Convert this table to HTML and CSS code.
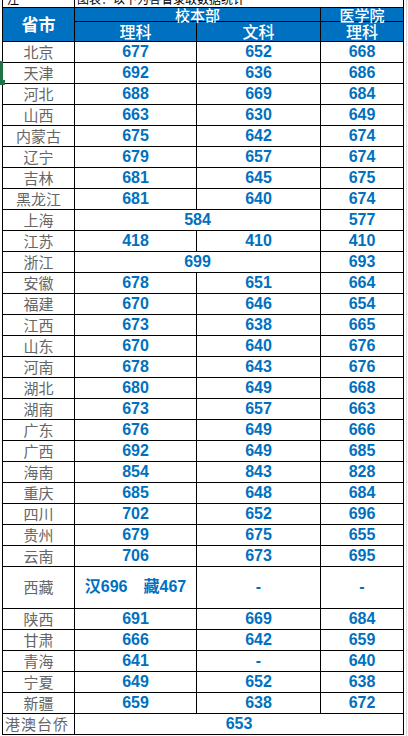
FILE: index.html
```html
<!DOCTYPE html>
<html lang="zh">
<head>
<meta charset="utf-8">
<title>分数线</title>
<link rel="stylesheet" href="styles.css">
</head>
<body>
<div class="sheet">
  <div class="marker"><span class="marker-dot"></span></div>
  <table class="scores">
    <colgroup>
      <col class="c1"><col class="c2"><col class="c3"><col class="c4">
    </colgroup>
    <tbody>
      <tr class="cut">
        <td><div class="clip clip-left">注</div></td>
        <td colspan="3"><div class="clip">图表：以下为各省录取数据统计</div></td>
      </tr>
      <tr class="h1">
        <th rowspan="2" class="prov-h">省市</th>
        <th colspan="2">校本部</th>
        <th>医学院</th>
      </tr>
      <tr class="h2">
        <th>理科</th>
        <th>文科</th>
        <th>理科</th>
      </tr>
      <tr><td class="p">北京</td><td>677</td><td>652</td><td>668</td></tr>
      <tr><td class="p">天津</td><td>692</td><td>636</td><td>686</td></tr>
      <tr><td class="p">河北</td><td>688</td><td>669</td><td>684</td></tr>
      <tr><td class="p">山西</td><td>663</td><td>630</td><td>649</td></tr>
      <tr><td class="p">内蒙古</td><td>675</td><td>642</td><td>674</td></tr>
      <tr><td class="p">辽宁</td><td>679</td><td>657</td><td>674</td></tr>
      <tr><td class="p">吉林</td><td>681</td><td>645</td><td>675</td></tr>
      <tr><td class="p">黑龙江</td><td>681</td><td>640</td><td>674</td></tr>
      <tr><td class="p">上海</td><td colspan="2">584</td><td>577</td></tr>
      <tr><td class="p">江苏</td><td>418</td><td>410</td><td>410</td></tr>
      <tr><td class="p">浙江</td><td colspan="2">699</td><td>693</td></tr>
      <tr><td class="p">安徽</td><td>678</td><td>651</td><td>664</td></tr>
      <tr><td class="p">福建</td><td>670</td><td>646</td><td>654</td></tr>
      <tr><td class="p">江西</td><td>673</td><td>638</td><td>665</td></tr>
      <tr><td class="p">山东</td><td>670</td><td>640</td><td>676</td></tr>
      <tr><td class="p">河南</td><td>678</td><td>643</td><td>676</td></tr>
      <tr><td class="p">湖北</td><td>680</td><td>649</td><td>668</td></tr>
      <tr><td class="p">湖南</td><td>673</td><td>657</td><td>663</td></tr>
      <tr><td class="p">广东</td><td>676</td><td>649</td><td>666</td></tr>
      <tr><td class="p">广西</td><td>692</td><td>649</td><td>685</td></tr>
      <tr><td class="p">海南</td><td>854</td><td>843</td><td>828</td></tr>
      <tr><td class="p">重庆</td><td>685</td><td>648</td><td>684</td></tr>
      <tr><td class="p">四川</td><td>702</td><td>652</td><td>696</td></tr>
      <tr><td class="p">贵州</td><td>679</td><td>675</td><td>655</td></tr>
      <tr><td class="p">云南</td><td>706</td><td>673</td><td>695</td></tr>
      <tr class="tall"><td class="p">西藏</td><td>汉696　藏467</td><td>-</td><td>-</td></tr>
      <tr><td class="p">陕西</td><td>691</td><td>669</td><td>684</td></tr>
      <tr><td class="p">甘肃</td><td>666</td><td>642</td><td>659</td></tr>
      <tr><td class="p">青海</td><td>641</td><td>-</td><td>640</td></tr>
      <tr><td class="p">宁夏</td><td>649</td><td>652</td><td>638</td></tr>
      <tr><td class="p">新疆</td><td>659</td><td>638</td><td>672</td></tr>
      <tr><td class="p p4">港澳台侨</td><td colspan="3">653</td></tr>
    </tbody>
  </table>
</div>
</body>
</html>
```
FILE: styles.css
```css
html, body {
  margin: 0;
  padding: 0;
  background: #ffffff;
}

.sheet {
  position: relative;
  width: 406px;
  height: 736px;
  border-right: 1px solid #d9d9d9;
  overflow: hidden;
}

.marker {
  position: absolute;
  left: 0;
  top: 61px;
  width: 3px;
  height: 22px;
  background: #217346;
}

.marker-dot {
  position: absolute;
  left: 0;
  bottom: -2px;
  width: 5px;
  height: 5px;
  background: #217346;
}

.scores {
  margin-left: 2px;
  border-collapse: collapse;
  table-layout: fixed;
  width: 401px;
  font-family: "Liberation Sans", Arial, "Noto Sans CJK SC", sans-serif;
}

.c1 { width: 72px; }
.c2 { width: 122px; }
.c3 { width: 124px; }
.c4 { width: 83px; }

.scores td,
.scores th {
  border: 1px solid #000;
  padding: 0;
  text-align: center;
  vertical-align: middle;
  line-height: 18px;
}

.scores tr {
  height: 21px;
}

.scores td {
  color: #0070c0;
  font-weight: 700;
  font-size: 16px;
}

.scores td.p {
  color: #666666;
  font-weight: 400;
  font-family: "Noto Sans CJK SC", sans-serif;
  font-size: 15px;
  line-height: 18px;
}

.scores td.p4 {
  text-align: left;
  padding-left: 2px;
  letter-spacing: 1px;
}

.scores tr.tall {
  height: 42px;
}

.scores th {
  background: #0070c0;
  color: #ffffff;
  font-family: "Noto Sans CJK SC", sans-serif;
  font-size: 16px;
  font-weight: 500;
}

.scores th.prov-h {
  font-size: 17px;
  font-weight: 700;
}

.scores tr.h1 {
  height: 14px;
}

.scores tr.h1 th {
  font-size: 15px;
  line-height: 13px;
}

.scores tr.h1 th.prov-h {
  font-size: 17px;
  line-height: 18px;
}

.scores tr.h2 {
  height: 20px;
}

.scores tr.cut {
  height: 7px;
}

.scores tr.cut td {
  border-top: none;
  color: #000;
  font-weight: 400;
  font-size: 12px;
  font-family: "Noto Sans CJK SC", sans-serif;
  text-align: left;
}

.clip {
  height: 6px;
  overflow: hidden;
  display: flex;
  align-items: flex-end;
  line-height: 14px;
  padding-left: 2px;
}

.clip-left {
  padding-left: 4px;
}
```
